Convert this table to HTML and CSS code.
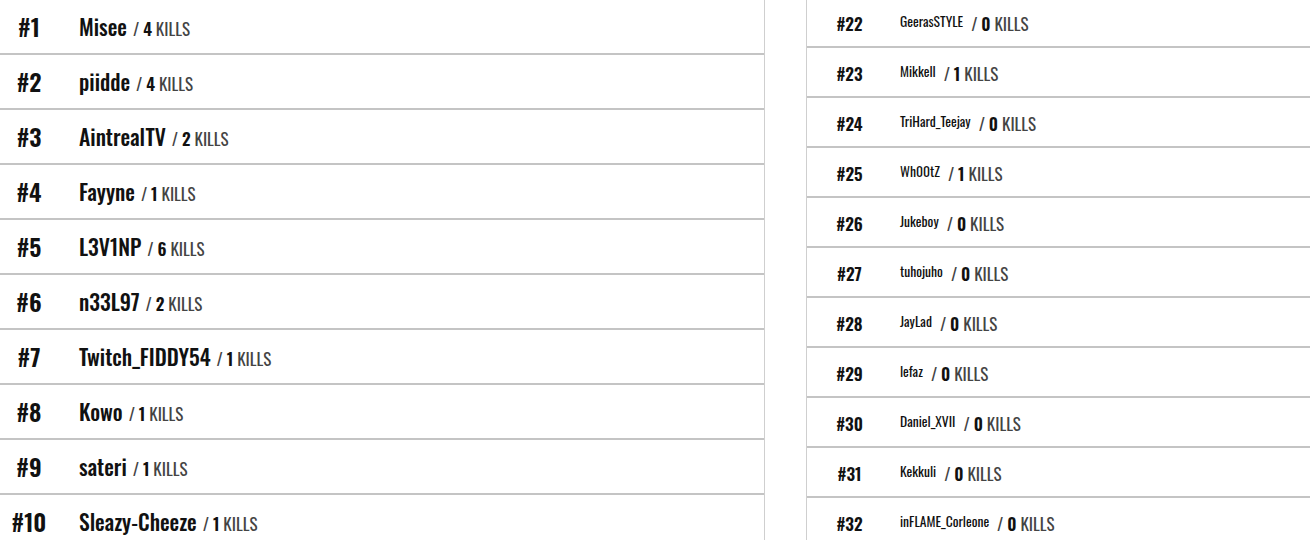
FILE: index.html
```html
<!DOCTYPE html>
<html>
<head>
<meta charset="utf-8">
<link rel="stylesheet" href="styles.css">
</head>
<body>
<div class="board">
  <div class="col-left">
    <div class="row-l"><span class="rank-l">#1</span><span class="player-l"><span class="name-l">Misee</span><span class="kills-l">/ <b>4</b> KILLS</span></span></div>
    <div class="row-l"><span class="rank-l">#2</span><span class="player-l"><span class="name-l">piidde</span><span class="kills-l">/ <b>4</b> KILLS</span></span></div>
    <div class="row-l"><span class="rank-l">#3</span><span class="player-l"><span class="name-l">AintrealTV</span><span class="kills-l">/ <b>2</b> KILLS</span></span></div>
    <div class="row-l"><span class="rank-l">#4</span><span class="player-l"><span class="name-l">Fayyne</span><span class="kills-l">/ <b>1</b> KILLS</span></span></div>
    <div class="row-l"><span class="rank-l">#5</span><span class="player-l"><span class="name-l">L3V1NP</span><span class="kills-l">/ <b>6</b> KILLS</span></span></div>
    <div class="row-l"><span class="rank-l">#6</span><span class="player-l"><span class="name-l">n33L97</span><span class="kills-l">/ <b>2</b> KILLS</span></span></div>
    <div class="row-l"><span class="rank-l">#7</span><span class="player-l"><span class="name-l">Twitch_FIDDY54</span><span class="kills-l">/ <b>1</b> KILLS</span></span></div>
    <div class="row-l"><span class="rank-l">#8</span><span class="player-l"><span class="name-l">Kowo</span><span class="kills-l">/ <b>1</b> KILLS</span></span></div>
    <div class="row-l"><span class="rank-l">#9</span><span class="player-l"><span class="name-l">sateri</span><span class="kills-l">/ <b>1</b> KILLS</span></span></div>
    <div class="row-l"><span class="rank-l">#10</span><span class="player-l"><span class="name-l">Sleazy-Cheeze</span><span class="kills-l">/ <b>1</b> KILLS</span></span></div>
  </div>
  <div class="col-right">
    <div class="list-r">
      <div class="row-r"><span class="rank-r">#22</span><span class="name-r">GeerasSTYLE</span><span class="kills-r">/ <b>0</b> KILLS</span></div>
      <div class="row-r"><span class="rank-r">#23</span><span class="name-r">Mikkell</span><span class="kills-r">/ <b>1</b> KILLS</span></div>
      <div class="row-r"><span class="rank-r">#24</span><span class="name-r">TriHard_Teejay</span><span class="kills-r">/ <b>0</b> KILLS</span></div>
      <div class="row-r"><span class="rank-r">#25</span><span class="name-r">Wh00tZ</span><span class="kills-r">/ <b>1</b> KILLS</span></div>
      <div class="row-r"><span class="rank-r">#26</span><span class="name-r">Jukeboy</span><span class="kills-r">/ <b>0</b> KILLS</span></div>
      <div class="row-r"><span class="rank-r">#27</span><span class="name-r">tuhojuho</span><span class="kills-r">/ <b>0</b> KILLS</span></div>
      <div class="row-r"><span class="rank-r">#28</span><span class="name-r">JayLad</span><span class="kills-r">/ <b>0</b> KILLS</span></div>
      <div class="row-r"><span class="rank-r">#29</span><span class="name-r">lefaz</span><span class="kills-r">/ <b>0</b> KILLS</span></div>
      <div class="row-r"><span class="rank-r">#30</span><span class="name-r">Daniel_XVII</span><span class="kills-r">/ <b>0</b> KILLS</span></div>
      <div class="row-r"><span class="rank-r">#31</span><span class="name-r">Kekkuli</span><span class="kills-r">/ <b>0</b> KILLS</span></div>
      <div class="row-r"><span class="rank-r">#32</span><span class="name-r">inFLAME_Corleone</span><span class="kills-r">/ <b>0</b> KILLS</span></div>
    </div>
  </div>
</div>
</body>
</html>
```
FILE: styles.css
```css
html, body {
  margin: 0;
  padding: 0;
  background: #fff;
  overflow: hidden;
}
body {
  font-family: "Oswald", "Roboto Condensed", "DejaVu Sans Condensed", sans-serif;
  color: #111;
}
.board {
  display: flex;
  height: 540px;
  gap: 41px;
}
.col-left {
  width: 764px;
  border-right: 1px solid #cfcfcf;
  flex: none;
}
.row-l {
  height: 51px;
  padding-bottom: 2px;
  border-bottom: 2px solid #c4c4c4;
  display: flex;
  align-items: center;
}
.rank-l {
  width: 58px;
  text-align: center;
  font-weight: 600;
  font-size: 24px;
}
.player-l {
  margin-left: 21px;
  white-space: nowrap;
}
.name-l {
  font-weight: 500;
  font-size: 21.6px;
}
.kills-l {
  margin-left: 6px;
  font-size: 17px;
  font-weight: 400;
  color: #444;
}
.kills-l b {
  font-weight: 600;
  color: #111;
}
.col-right {
  flex: 1;
  border-left: 1px solid #cfcfcf;
  overflow: hidden;
}
.list-r {
  margin-top: -2px;
}
.row-r {
  height: 46px;
  padding-top: 2px;
  border-bottom: 2px solid #c4c4c4;
  display: flex;
  align-items: center;
}
.rank-r {
  width: 85px;
  text-align: center;
  font-weight: 600;
  font-size: 17px;
}
.name-r {
  margin-left: 8px;
  font-size: 13.6px;
  font-weight: 400;
  margin-bottom: 5px;
}
.kills-r {
  margin-left: 8px;
  font-size: 17px;
  font-weight: 400;
  color: #444;
}
.kills-r b {
  font-weight: 600;
  color: #111;
}
```
